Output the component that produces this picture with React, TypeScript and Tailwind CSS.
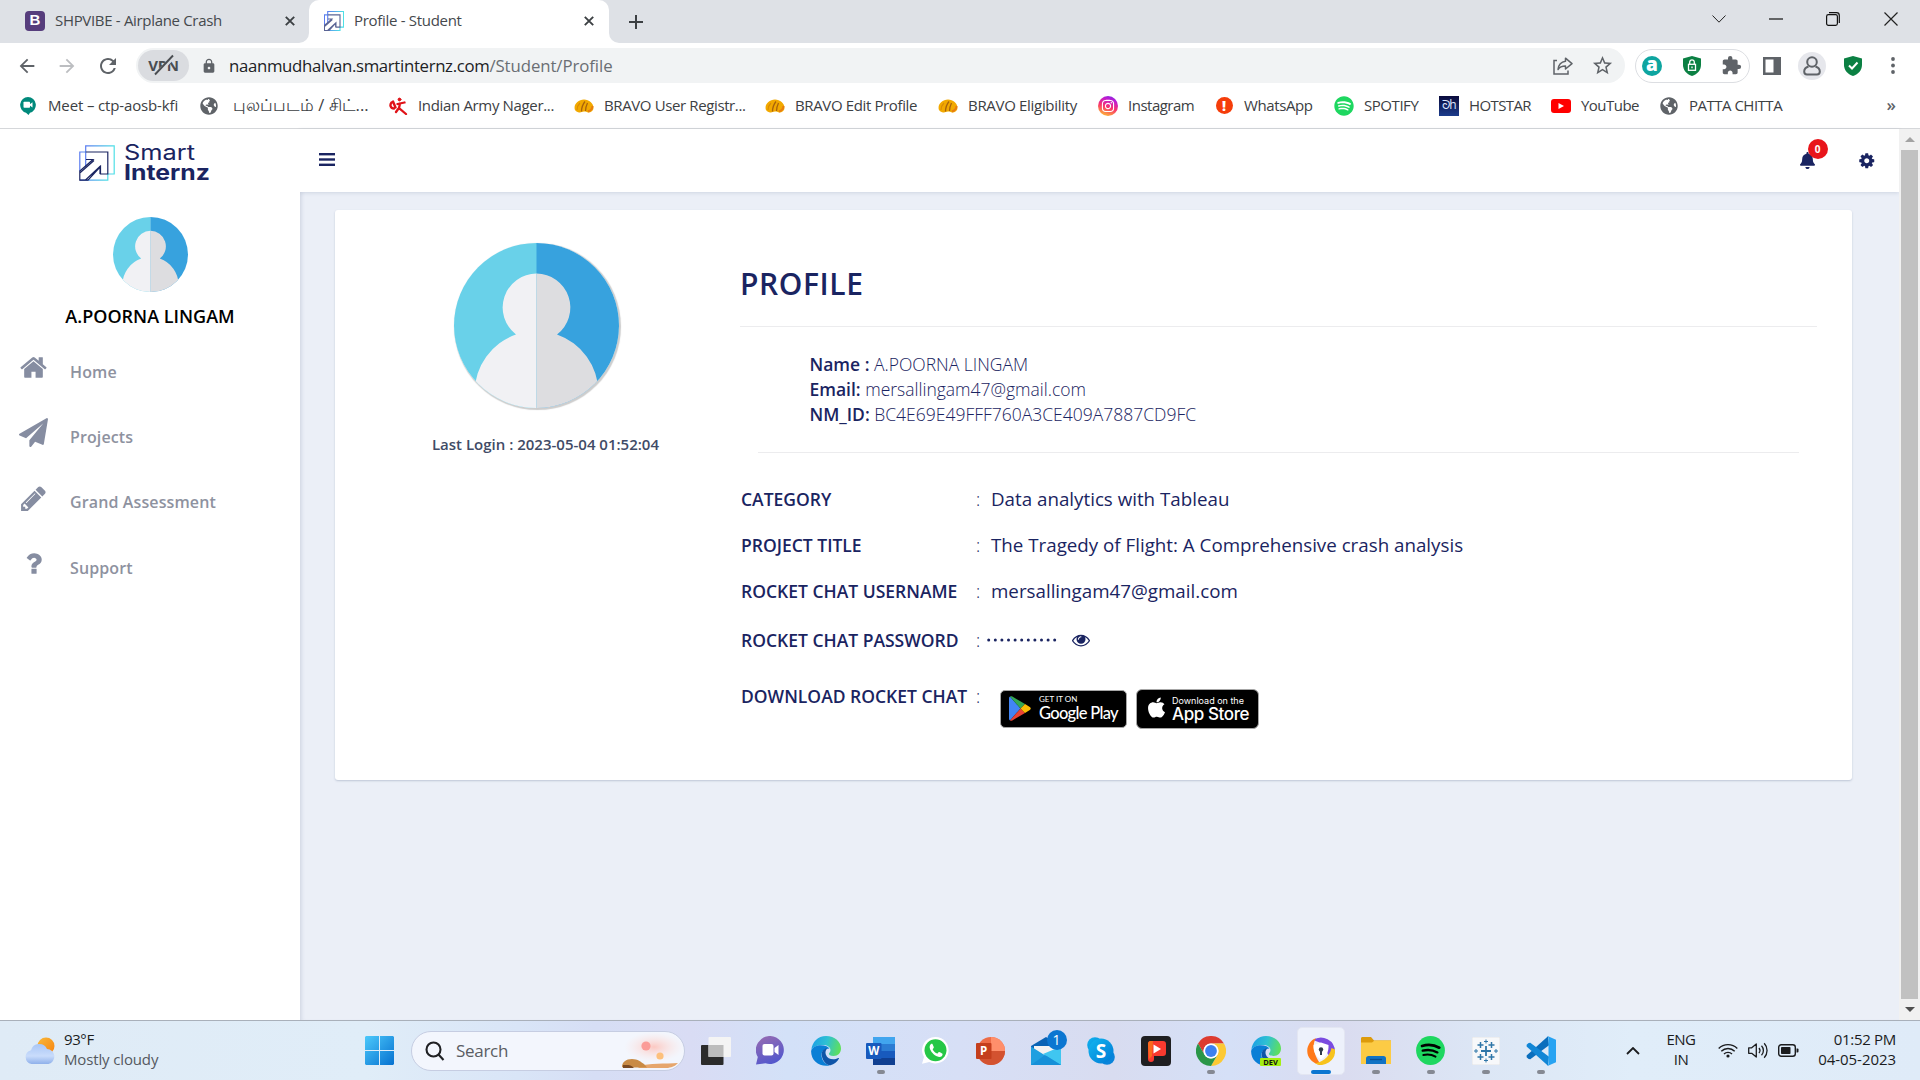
import React from "react";
import { FaBell, FaInstagram, FaSpotify, FaApple, FaGlobeAmericas } from "react-icons/fa";
import { MdExtension, MdLock, MdStarBorder, MdRefresh, MdArrowBack, MdArrowForward } from "react-icons/md";

const uiFont = "font-['Open_Sans','Noto_Sans',sans-serif]";

/* ---------- shared drawings ---------- */

function Avatar({ size, id }: { size: number; id: string }) {
  return (
    <svg width={size} height={size} viewBox="0 0 165 165">
      <clipPath id={id}>
        <circle cx="82.5" cy="82.5" r="82.5" />
      </clipPath>
      <g clipPath={`url(#${id})`}>
        <rect width="83" height="165" fill="#69d1e9" />
        <rect x="82.5" width="83" height="165" fill="#37a2de" />
        <path d="M82.5 30.500A34 34 0 0 0 62 91.500A62 62 0 0 0 20.500 149V165H82.500Z" fill="#f1f1f4" />
        <path d="M82.500 30.500A34 34 0 0 1 103 91.500A62 62 0 0 1 144.500 149V165H82.500Z" fill="#dddde0" />
      </g>
    </svg>
  );
}

function Glyph({ d, size, color }: { d: string; size: number; color: string }) {
  return (
    <svg width={size} height={size} viewBox="0 0 1792 1792" fill={color}>
      <path d={d} />
    </svg>
  );
}

const glyphs = {
  home: "M1472 992v480q0 26-19 45t-45 19h-384v-384h-256v384h-384q-26 0-45-19t-19-45v-480q0-1 .5-3t.5-3l575-474 575 474q1 2 1 6zm223-69l-62 74q-8 9-21 11h-3q-13 0-21-7l-692-577-692 577q-12 8-24 7-13-2-21-11l-62-74q-8-10-7-23.5t11-21.500l719-599q32-26 76-26t76 26l244 204v-195q0-14 9-23t23-9h192q14 0 23 9t9 23v408l219 182q10 8 11 21.500t-7 23.500z",
  plane: "M1764 11q33 24 27 64l-256 1536q-5 29-32 45-14 8-31 8-11 0-24-5l-453-185-242 295q-18 23-49 23-13 0-22-4-19-7-30.500-23.500t-11.500-36.500v-349l864-1059-1069 925-395-162q-37-14-40-55-2-40 32-59l1664-960q15-9 32-9 20 0 36 11z",
  pencil: "M491 1536l91-91-235-235-91 91v107h128v128h107zm523-928q0-22-22-22-10 0-17 7l-542 542q-7 7-7 17 0 22 22 22 10 0 17-7l542-542q7-7 7-17zm-54-192l416 416-832 832h-416v-416zm683 96q0 53-37 90l-166 166-416-416 166-165q36-38 90-38 53 0 91 38l235 234q37 39 37 91z",
  question: "M1088 1256v240q0 16-12 28t-28 12h-240q-16 0-28-12t-12-28v-240q0-16 12-28t28-12h240q16 0 28 12t12 28zm316-600q0 54-15.500 101t-35 76.500-55 59.500-57.500 43.500-61 35.500q-41 23-68.500 65t-27.500 67q0 17-12 32.500t-28 15.500h-240q-15 0-25.500-18.500t-10.500-37.500v-45q0-83 65-156.500t143-108.500q59-27 84-56t25-76q0-42-46.500-74t-107.500-32q-65 0-108 29-35 25-107 115-13 16-31 16-12 0-25-8l-164-125q-13-10-15.500-25t5.500-28q160-266 464-266 80 0 161 31t146 83 106 127.500 41 158.500z",
  eye: "M1664 960q-152-236-381-353 61 104 61 225 0 185-131.500 316.500t-316.500 131.500-316.500-131.500-131.500-316.500q0-121 61-225-229 117-381 353 133 205 333.500 326.500t434.500 121.500 434.500-121.500 333.500-326.500zm-720-384q0-20-14-34t-34-14q-125 0-214.500 89.500t-89.500 214.500q0 20 14 34t34 14 34-14 14-34q0-86 61-147t147-61q20 0 34-14t14-34zm848 384q0 34-20 69-140 230-376.500 368.500t-499.500 138.500-499.500-139-376.500-368q-20-35-20-69t20-69q140-229 376.500-368t499.500-139 499.500 139 376.500 368q20 35 20 69z",
  cog: "M1152 896q0-106-75-181t-181-75-181 75-75 181 75 181 181 75 181-75 75-181zm512-109v222q0 12-8 23t-20 13l-185 28q-19 54-39 91 35 50 107 138 10 12 10 25t-9 23q-27 37-99 108t-94 71q-12 0-26-9l-138-108q-44 23-91 38-16 136-29 186-7 28-36 28h-222q-14 0-24.500-8.500t-11.500-21.500l-28-184q-49-16-90-37l-141 107q-10 9-25 9-14 0-25-11-126-114-165-168-7-10-7-23 0-12 8-23 15-21 51-66.500t54-70.500q-27-50-41-99l-183-27q-13-2-21-12.500t-8-23.500v-222q0-12 8-23t19-13l186-28q14-46 39-92-40-57-107-138-10-12-10-24 0-10 9-23 26-36 98.500-107.500t94.500-71.500q13 0 26 10l138 107q44-23 91-38 16-136 29-186 7-28 36-28h222q14 0 24.500 8.500t11.500 21.500l28 184q49 16 90 37l142-107q9-9 24-9 13 0 25 10 129 119 165 170 7 8 7 22 0 12-8 23-15 21-51 66.500t-54 70.500q26 50 41 98l183 28q13 2 21 12.500t8 23.500z",
};

function BrandMark({ size, stroke }: { size: number; stroke: number }) {
  return (
    <svg width={size} height={size} viewBox="0 0 36 36" fill="none" strokeWidth={stroke}>
      <defs>
        <linearGradient id={`bm${size}`} x1="0" x2="1">
          <stop offset="0" stopColor="#5b7cf0" />
          <stop offset="1" stopColor="#4fe0e6" />
        </linearGradient>
      </defs>
      <path d="M6.700 7V.800H35.200V29H28.500M6.700 7V22" stroke={`url(#bm${size})`} />
      <path d="M.800 26V7H7M.800 35.200H28.800V29" stroke={`url(#bm${size})`} />
      <path d="M6.700 7H28.800V29H21.500V21.500L9 35.200H.800V26L14 14.500H7M21 29V21.500L6.500 35M.800 28L15 15.500" stroke={size > 30 ? "#1a2461" : "#5a6494"} />
    </svg>
  );
}

/* ---------- browser chrome ---------- */

function CloseX() {
  return (
    <svg width="10" height="10" viewBox="0 0 10 10" stroke="#3c4043" strokeWidth="1.900">
      <path d="M.8.800l8.400 8.400M9.200.800L.800 9.200" />
    </svg>
  );
}

function TabStrip() {
  return (
    <div className="flex h-[43px] bg-[linear-gradient(#dee1e6_50%,#fff_50%)]">
      <div className="flex w-[309px] items-center rounded-br-[10px] bg-[#dee1e6] pb-[2px] pl-[25px]">
        <div className="flex h-5 w-5 items-center justify-center rounded-[4px] bg-[#563d7c] font-['Liberation_Sans'] text-[15px] font-bold text-white">B</div>
        <span className="ml-[10px] w-[230px] text-[15px] tracking-[-0.32px] text-[#45494d]">SHPVIBE - Airplane Crash</span>
        <CloseX />
      </div>
      <div className="flex w-[300px] items-center rounded-t-[10px] bg-white pb-[2px] pl-[15px]">
        <BrandMark size={20} stroke={2} />
        <span className="ml-[10px] w-[230px] text-[15px] tracking-[-0.3px] text-[#45494d]">Profile - Student</span>
        <CloseX />
      </div>
      <div className="flex flex-1 items-center rounded-bl-[10px] bg-[#dee1e6] pl-5">
        <svg width="14" height="14" viewBox="0 0 14 14" stroke="#3c4043" strokeWidth="2">
          <path d="M7 0v14M0 7h14" />
        </svg>
        <div className="ml-auto flex items-center pr-[22px] pb-[6px]">
          <svg width="14" height="8" viewBox="0 0 14 8" fill="none" stroke="#222">
            <path d="M.5.500L7 7.200 13.500.500" />
          </svg>
          <svg width="14" height="14" viewBox="0 0 14 14" stroke="#111" strokeWidth="1.200" className="ml-[43px]">
            <path d="M0 7h14" />
          </svg>
          <svg width="14" height="14" viewBox="0 0 14 14" fill="none" stroke="#111" strokeWidth="1.200" className="ml-[43px]">
            <rect x=".6" y="2.600" width="10.800" height="10.800" rx="1.800" />
            <path d="M3 .7h7.500a2.800 2.800 0 0 1 2.800 2.800V11" />
          </svg>
          <svg width="14" height="14" viewBox="0 0 14 14" stroke="#222" strokeWidth="1.200" className="ml-[44px]">
            <path d="M.5.500l13 13M13.500.500l-13 13" />
          </svg>
        </div>
      </div>
    </div>
  );
}

function Shield({ children }: { children: React.ReactNode }) {
  return (
    <svg width="18" height="20" viewBox="0 0 18 20" fill="none">
      <path d="M9 0l9 2.600V9c0 5-3.500 9-9 11C3.500 18 0 14 0 9V2.600z" fill="#0b8043" />
      {children}
    </svg>
  );
}

function Toolbar() {
  return (
    <div className="flex h-[45px] items-center bg-white pl-[16px] text-[#5f6368]">
      <MdArrowBack size={22} />
      <MdArrowForward size={22} className="ml-[18px] text-[#bcbec1]" />
      <MdRefresh size={24} className="ml-[18px]" />
      <div className="ml-[16px] flex h-[35px] w-[1489px] items-center rounded-full bg-[#f1f3f4] pl-[2px]">
        <div className="relative flex h-[31px] w-[51px] items-center justify-center rounded-full bg-[#dadce0] text-[15px] font-bold tracking-[-0.3px] text-[#4a4d51]">
          VPN
          <svg className="absolute top-[4px] left-[15px]" width="24" height="22" viewBox="0 0 24 22">
            <path d="M3 20.500L20.500 3" stroke="#dadce0" strokeWidth="4" />
            <path d="M2 20.500L20 1.500" stroke="#4a4d51" strokeWidth="1.900" />
          </svg>
        </div>
        <MdLock size={16} className="ml-[12px]" />
        <div className="ml-[12px] flex text-[16.8px]">
          <span className="tracking-[-0.33px] text-[#202124]">naanmudhalvan.smartinternz.com</span>
          <span className="tracking-[-0.08px] text-[#6a6e73]">/Student/Profile</span>
        </div>
        <svg width="20" height="18" viewBox="0 0 20 18" fill="none" stroke="#5f6368" strokeWidth="1.500" className="ml-auto">
          <path d="M4 3.500H1V17h14v-3.500" />
          <path d="M12.500 1.200L19 6.600l-6.500 5.400V9C9 9 6.500 10 5 12.500 5.500 8 8.500 4.700 12.500 4.200z" strokeLinejoin="round" />
        </svg>
        <MdStarBorder size={23} className="mr-[11px] ml-[18px]" />
      </div>
      <div className="ml-[10px] flex h-[34px] w-[115px] items-center rounded-full border border-[#dcdee2] pl-[6px]">
        <div className="flex h-5 w-5 items-center justify-center rounded-full bg-[#0ea5a0] pb-[3px] text-[19px] leading-none font-extrabold text-white">a</div>
        <div className="ml-[21px]">
          <Shield>
            <rect x="5.500" y="8.300" width="7" height="6" stroke="#fff" strokeWidth="1.300" />
            <path d="M6.700 8V6.200a2.300 2.300 0 0 1 4.600 0V8M9 10.500v1.800" stroke="#fff" strokeWidth="1.300" />
          </Shield>
        </div>
        <MdExtension size={21} className="ml-[20px]" />
      </div>
      <svg width="18" height="18" viewBox="0 0 18 18" className="ml-[13px]">
        <path d="M0 0h18v18H0zM2.500 2.500v13h8v-13z" fill="#5f6368" fillRule="evenodd" />
      </svg>
      <div className="ml-[17px] flex h-[28px] w-[28px] items-center justify-center rounded-full bg-[#e6e7ec]">
        <svg width="18" height="20" viewBox="0 0 18 20" fill="none" stroke="#5f6368" strokeWidth="2">
          <circle cx="9" cy="6" r="4.800" />
          <path d="M5.500 10.500C2.500 11.500 1.200 13.500 1.200 15.500c0 2 1 3 2.800 3h10c1.800 0 2.800-1 2.800-3 0-2-1.300-4-4.300-5" />
        </svg>
      </div>
      <div className="ml-[18px]">
        <Shield>
          <path d="M5 9.500l3 3 5.500-6" stroke="#fff" strokeWidth="2" />
        </Shield>
      </div>
      <svg width="4" height="17" viewBox="0 0 4 17" fill="#5f6368" className="ml-[29px]">
        <circle cx="2" cy="2" r="1.900" />
        <circle cx="2" cy="8.500" r="1.900" />
        <circle cx="2" cy="15" r="1.900" />
      </svg>
    </div>
  );
}

const GlobeIcon = <FaGlobeAmericas size={18} color="#5f6368" />;
const BravoIcon = (
  <svg width="20" height="14" viewBox="0 0 20 14">
    <path d="M1 11C-1 6 4 .500 10 .500S21 6 19 11c-2 2.500-4 2.500-5 2.500-2-1-2-1-4-1s-3 1-4 1-4-.500-5-2.500z" fill="#f2a900" />
    <path d="M7.500 12.500C7.500 8 9 5 11 2.500M11.500 12c0-4 1-6 2-8" stroke="#a8630c" strokeWidth="1.300" fill="none" />
    <path d="M3 11c0-3 1-5 3-7" stroke="#d98a06" strokeWidth="1.100" fill="none" />
    <path d="M14 12.500c2.500-1 4.500-3 4.500-5.500" stroke="#e87d10" strokeWidth="2" fill="none" />
  </svg>
);

const bookmarks: { label: string; cls: string; icon: React.ReactNode }[] = [
  {
    label: "Meet – ctp-aosb-kfi",
    cls: "w-[181px] tracking-[-0.14px]",
    icon: (
      <svg width="16" height="18" viewBox="0 0 16 18">
        <path d="M8 0a8 8 0 0 1 2 15.700L8.500 18 6 15.700A8 8 0 0 1 8 0z" fill="#00897b" />
        <rect x="3.500" y="4.800" width="6.500" height="6" rx=".8" fill="#fff" />
        <path d="M9.500 7.500l3-2.300v5.300l-3-2.200z" fill="#fff" />
      </svg>
    ),
  },
  { label: "புலப்படம் / சிட்...", cls: "w-[189px] text-[16.500px] pl-[14px]", icon: GlobeIcon },
  {
    label: "Indian Army Nager...",
    cls: "w-[186px] tracking-[-0.34px]",
    icon: (
      <svg width="19" height="18" viewBox="0 0 19 18" fill="none" stroke="#e01218" strokeLinecap="round">
        <circle cx="10.500" cy="2.500" r="1.400" fill="#e01218" />
        <path d="M11 6.500l-1 4.500 7 6M9.500 11.500L7 15M8.500 7l7-1.500" strokeWidth="2.300" />
        <path d="M2.500 5.500c-2 2.500-1 6 2.500 6M4 4.500l2.500 6" strokeWidth="2.400" />
      </svg>
    ),
  },
  { label: "BRAVO User Registr...", cls: "w-[191px] tracking-[-0.38px]", icon: BravoIcon },
  { label: "BRAVO Edit Profile", cls: "w-[173px] tracking-[-0.37px]", icon: BravoIcon },
  { label: "BRAVO Eligibility", cls: "w-[160px] tracking-[-0.31px]", icon: BravoIcon },
  {
    label: "Instagram",
    cls: "w-[116px] tracking-[-0.5px]",
    icon: (
      <div className="flex h-5 w-5 items-center justify-center rounded-full bg-[linear-gradient(20deg,#fdc62f_5%,#f9356b_45%,#c21bd0_75%,#6a2ce8)]">
        <FaInstagram size={14} color="#fff" />
      </div>
    ),
  },
  {
    label: "WhatsApp",
    cls: "w-[120px] tracking-[-0.4px]",
    icon: <div className="flex h-[17px] w-[17px] items-center justify-center rounded-full bg-[#f53d0a] text-[14px] font-extrabold text-white">!</div>,
  },
  { label: "SPOTIFY", cls: "w-[105px] tracking-[-0.45px]", icon: <FaSpotify size={20} color="#1ed760" /> },
  {
    label: "HOTSTAR",
    cls: "w-[112px] tracking-[-0.6px]",
    icon: <div className="flex h-5 w-5 items-center justify-center bg-[linear-gradient(#0a0a3c,#1c3c8c)] pb-[2px] font-['Open_Sans'] text-[12px] tracking-[-0.5px] text-[#dfe6ff]">ᘐh</div>,
  },
  {
    label: "YouTube",
    cls: "w-[108px] tracking-[-0.53px]",
    icon: (
      <svg width="20" height="14" viewBox="0 0 20 14">
        <rect width="20" height="14" rx="3" fill="#f00" />
        <path d="M7.500 4l5.500 3-5.500 3z" fill="#fff" />
      </svg>
    ),
  },
  { label: "PATTA CHITTA", cls: "w-[200px] tracking-[-0.5px]", icon: GlobeIcon },
];

function BookmarksBar() {
  return (
    <div className="flex h-[41px] items-center border-b border-[#d5d7da] bg-white pb-[5px] pl-[18px] text-[15px] whitespace-nowrap text-[#3c4043]">
      {bookmarks.map((b) => (
        <React.Fragment key={b.label}>
          <div className="flex w-5 shrink-0 justify-center">{b.icon}</div>
          <span className={`-mr-5 shrink-0 pl-[10px] ${b.cls}`}>{b.label}</span>
        </React.Fragment>
      ))}
      <span className="mr-[24px] mb-[2px] ml-auto text-[17px] font-semibold text-[#5f6368]">»</span>
    </div>
  );
}

/* ---------- page ---------- */

const menu = [
  { label: "Home", d: glyphs.home },
  { label: "Projects", d: glyphs.plane },
  { label: "Grand Assessment", d: glyphs.pencil },
  { label: "Support", d: glyphs.question },
];

function Sidebar() {
  return (
    <aside className="relative z-10 w-[300px] shrink-0 bg-white">
      <div className="flex h-[63px] items-start pt-[16px] pl-[79px]">
        <BrandMark size={36} stroke={1.2} />
        <div className="ml-[9px] flex flex-col font-['Inter'] text-[21px] leading-[19px] text-[#1a2461]">
          <span className="-mt-[2px] mb-[1px] origin-left scale-x-[1.21]">Smart</span>
          <span className="origin-left scale-x-[1.18] font-bold">Internz</span>
        </div>
      </div>
      <div className="flex flex-col items-center pt-[25px]">
        <Avatar size={75} id="avatarSmall" />
        <span className="mt-[12px] text-[18px] leading-[25px] font-semibold text-black">A.POORNA LINGAM</span>
      </div>
      <ul className="pt-[10px]">
        {menu.map((m) => (
          <li key={m.label} className="flex h-[65.300px] items-center pl-[19px] text-base font-semibold tracking-[0.12px] text-[#8e929f]">
            <span className="mb-[8px]">
              <Glyph d={m.d} size={29} color="#868da1" />
            </span>
            <span className="ml-[22px]">{m.label}</span>
          </li>
        ))}
      </ul>
    </aside>
  );
}

function TopBar() {
  return (
    <div className="flex h-[63px] items-center bg-white pl-[19px] shadow-[0_1px_4px_rgba(60,80,120,0.16)]">
      <svg width="16" height="13" viewBox="0 0 16 13" fill="#1a2461" className="mb-[2px]">
        <rect width="16" height="2.400" />
        <rect y="5.300" width="16" height="2.400" />
        <rect y="10.600" width="16" height="2.400" />
      </svg>
      <div className="relative ml-auto">
        <FaBell size={17} color="#1a2461" />
        <span className="absolute -top-[13px] left-[9px] flex h-5 w-5 items-center justify-center rounded-full bg-[#e8151b] text-[10px] font-bold text-white">0</span>
      </div>
      <div className="mr-[24px] ml-[42px]">
        <Glyph d={glyphs.cog} size={17.5} color="#1a2461" />
      </div>
    </div>
  );
}

function DetailRow({ label, cls, children }: { label: string; cls: string; children: React.ReactNode }) {
  return (
    <div className={`flex items-center ${cls}`}>
      <span className="w-[235px] text-[17.500px] font-semibold whitespace-nowrap">{label}</span>
      <span className="w-[15px] text-[17.500px] font-light">:</span>
      {children}
    </div>
  );
}

function GooglePlayBadge() {
  return (
    <div className="flex h-[38px] w-[127px] items-center rounded-[5px] border border-[#a6a6a6] bg-black pl-[8px] text-white">
      <svg width="22" height="25" viewBox="0 0 22 25">
        <path d="M1 .500L11.500 12.500 1 24.500C.3 24 0 23.500 0 22.500v-20C0 1.500.3 1 1 .500z" fill="#4285f4" />
        <path d="M1 .500C1.800 0 2.600.200 3.300.600L16 8 11.500 12.500z" fill="#34a853" />
        <path d="M1 24.500c.8.500 1.600.300 2.300-.1L16 17l-4.500-4.500z" fill="#ea4335" />
        <path d="M16 8l4.800 3c1.300.800 1.300 2.200 0 3L16 17l-4.500-4.500z" fill="#fbbc04" />
      </svg>
      <div className="ml-[8px] flex flex-col font-['Lato'] whitespace-nowrap">
        <span className="text-[8px] leading-[9px]">GET IT ON</span>
        <span className="text-[16.500px] leading-[18px] font-medium tracking-[-0.7px]">Google Play</span>
      </div>
    </div>
  );
}

function AppStoreBadge() {
  return (
    <div className="flex h-10 w-[123px] items-center rounded-[6px] border border-[#a6a6a6] bg-black pl-[8px] text-white">
      <FaApple size={23} className="mb-[2px]" />
      <div className="ml-[4px] flex flex-col font-['Inter'] whitespace-nowrap">
        <span className="text-[9px] leading-[11px]">Download on the</span>
        <span className="text-[17px] leading-[17px] font-medium tracking-[-0.4px]">App Store</span>
      </div>
    </div>
  );
}

function ProfileCard() {
  return (
    <div className="mt-[18px] ml-[35px] flex h-[570px] w-[1517px] rounded-[3px] bg-white text-[#1a2461] shadow-[0_1px_2px_rgba(60,80,120,0.25)]">
      <div className="flex w-[405px] flex-col items-center pt-[33px]">
        <div className="-ml-[3px] rounded-full shadow-[1px_1px_1px_1px_rgba(0,0,0,0.2)]">
          <Avatar size={165} id="avatarLarge" />
        </div>
        <span className="mt-[24px] ml-[16px] text-[15px] leading-[24px] font-semibold whitespace-nowrap text-[#414b66]">Last Login : 2023-05-04 01:52:04</span>
      </div>
      <div className="w-[1077px]">
        <h1 className="pt-[53px] text-[30px] leading-[42px] font-semibold tracking-[0.6px]">PROFILE</h1>
        <hr className="mt-[21px] border-[#ececee]" />
        <div className="pt-[25px] pl-[69.500px] text-[17.500px] leading-[25px] font-light">
          <p><b className="font-semibold">Name :</b> A.POORNA LINGAM</p>
          <p><b className="font-semibold">Email:</b> mersallingam47@gmail.com</p>
          <p><b className="font-semibold">NM_ID:</b> BC4E69E49FFF760A3CE409A7887CD9FC</p>
        </div>
        <hr className="mt-[25px] mr-[18px] ml-[18px] border-[#ececee]" />
        <div className="pt-[23px] pl-[1px]">
          <DetailRow label="CATEGORY" cls="h-[46px]">
            <span className="text-[18.750px]">Data analytics with Tableau</span>
          </DetailRow>
          <DetailRow label="PROJECT TITLE" cls="h-[46px]">
            <span className="text-[18.750px]">The Tragedy of Flight: A Comprehensive crash analysis</span>
          </DetailRow>
          <DetailRow label="ROCKET CHAT USERNAME" cls="h-[46px]">
            <span className="text-[18.750px]">mersallingam47@gmail.com</span>
          </DetailRow>
          <DetailRow label="ROCKET CHAT PASSWORD" cls="h-[52px]">
            <svg width="70" height="4" viewBox="0 0 70 4" fill="#1a2461" className="-ml-[4px]">
              {Array.from({ length: 11 }, (_, i) => (
                <circle key={i} cx={1.7 + i * 6.6} cy="2" r="1.500" />
              ))}
            </svg>
            <span className="ml-[15px]">
              <Glyph d={glyphs.eye} size={18} color="#1a2461" />
            </span>
          </DetailRow>
          <DetailRow label="DOWNLOAD ROCKET CHAT" cls="h-[60px]">
            <div className="mt-[25px] ml-[9px] flex items-center gap-[9px]">
              <GooglePlayBadge />
              <AppStoreBadge />
            </div>
          </DetailRow>
        </div>
      </div>
    </div>
  );
}

function Scrollbar() {
  return (
    <div className="relative z-10 flex w-[21px] shrink-0 flex-col items-center bg-[#f1f1f1]">
      <div className="flex h-[21px] items-center">
        <svg width="10" height="5" viewBox="0 0 10 5" fill="#a3a3a3"><path d="M0 5L5 0l5 5z" /></svg>
      </div>
      <div className="w-[17px] flex-1 bg-[#c1c1c1]" />
      <div className="flex h-[21px] items-center">
        <svg width="10" height="5" viewBox="0 0 10 5" fill="#505050"><path d="M0 0l5 5 5-5z" /></svg>
      </div>
    </div>
  );
}

/* ---------- taskbar ---------- */

function EdgeIcon({ id, dev }: { id: string; dev?: boolean }) {
  return (
    <svg width="30" height="30" viewBox="0 0 30 30">
      <defs>
        <linearGradient id={id} x1="0" y1=".3" x2="1" y2=".5">
          <stop offset="0" stopColor="#1c9fe6" />
          <stop offset=".5" stopColor="#2fc1d2" />
          <stop offset="1" stopColor="#5fe05a" />
        </linearGradient>
      </defs>
      <path d="M.4 14C1 6 7 0 15 0c9 0 15 6 15 12.500 0 4.500-3 7.500-7.500 7.500-3.500 0-4.600-1.200-4.600-2.200 0-.900 1.600-1.300 1.600-3.800C19.500 11 16 9 12 9 6 9 2 11 .4 14z" fill={`url(#${id})`} />
      <path d="M.1 15C1 11.500 5 9.200 9.500 9.200c5 0 8 1.800 9 3.300-6 0-8 3.500-8 6.500 0 5 3.500 9.500 8.500 10.400C9 31.500 0 25 .1 15z" fill="#0a7fd6" />
      <path d="M15.500 12.200c-4 1-5.200 4.300-4.700 7.300.7 5.500 4.700 10 8.700 9.700 3.500-.700 7-3.700 8.500-6.700.3-.500-.2-.800-.8-.500-4.200 2.500-10.700 1.500-12.400-3.500-.8-2.500 0-5 1.700-6z" fill="#0f55a8" />
      {dev && (
        <g>
          <rect x="9" y="22" width="21" height="8" rx="1" fill="#a4ef12" />
          <text x="19.500" y="29" textAnchor="middle" fontFamily="Open Sans" fontWeight="700" fontSize="7.500" fill="#111">DEV</text>
        </g>
      )}
    </svg>
  );
}

const taskIcons: { name: string; mark?: "open" | "active"; icon: React.ReactNode }[] = [
  {
    name: "task-view",
    icon: (
      <svg width="30" height="28" viewBox="0 0 30 28">
        <rect y="8" width="22.500" height="20" rx="1" fill="#2b2b2b" />
        <rect x="7.500" y="0" width="22.500" height="20" rx="1" fill="#f4f4f4" />
        <rect x="7.500" y="8" width="15" height="12" fill="#bcbcbc" />
      </svg>
    ),
  },
  {
    name: "chat",
    icon: (
      <svg width="29" height="29" viewBox="0 0 29 29">
        <defs>
          <linearGradient id="chat" x1="0" y1="0" x2=".4" y2="1"><stop offset="0" stopColor="#9a6cb0" /><stop offset="1" stopColor="#5558cc" /></linearGradient>
        </defs>
        <path d="M14.500 0a14 14 0 1 1-5 27.300L0 28.500 1.800 21A14 14 0 0 1 14.500 0z" fill="url(#chat)" />
        <rect x="6.500" y="8" width="11" height="11.500" rx="2" fill="#fff" />
        <path d="M18.500 12l4-3v10l-4-3z" fill="#fff" />
      </svg>
    ),
  },
  { name: "edge", icon: <EdgeIcon id="edge1" /> },
  {
    name: "word",
    mark: "open",
    icon: (
      <svg width="29" height="28" viewBox="0 0 29 28">
        <rect x="7" width="22" height="7.500" fill="#41a5ee" />
        <rect x="7" y="7" width="22" height="7" fill="#2b7cd3" />
        <rect x="7" y="14" width="22" height="7" fill="#185abd" />
        <rect x="7" y="21" width="22" height="7" fill="#103f91" />
        <rect y="6" width="15.500" height="16" rx="1" fill="#185abd" />
        <text x="7.700" y="18" textAnchor="middle" fontFamily="Open Sans" fontWeight="700" fontSize="11.500" fill="#fff">W</text>
      </svg>
    ),
  },
  {
    name: "whatsapp",
    icon: (
      <svg width="27" height="27" viewBox="0 0 27 27">
        <path d="M13.500 0a13.200 13.200 0 1 1-6.200 24.900L0 26.800 2 20A13.200 13.200 0 0 1 13.500 0z" fill="#fff" />
        <circle cx="13.500" cy="13.300" r="11" fill="#25c746" />
        <path d="M9.300 6.800c-1.500 1-2.200 3-1.200 5.500 1.500 3.700 5 7 9 7.600 2 .200 3.500-1.200 3.500-3 0-.400-3.200-2-3.600-1.900-.6.200-1.300 1.700-1.800 1.600-1.700-.600-3.700-2.500-4.500-4.200-.1-.500 1.100-1.500 1.100-2 0-.600-1.200-3.400-1.600-3.600-.3-.100-.600-.100-.9 0z" fill="#fff" />
      </svg>
    ),
  },
  {
    name: "powerpoint",
    icon: (
      <svg width="29" height="28" viewBox="0 0 29 28">
        <circle cx="15" cy="14" r="14" fill="#ed6c47" />
        <path d="M15 0a14 14 0 0 1 14 14H15z" fill="#ff8f6b" />
        <path d="M1 14a14 14 0 0 0 28 0z" fill="#d35230" />
        <rect y="6" width="15.500" height="16" rx="1" fill="#c43e1c" />
        <text x="7.700" y="18" textAnchor="middle" fontFamily="Open Sans" fontWeight="700" fontSize="11.500" fill="#fff">P</text>
      </svg>
    ),
  },
  {
    name: "mail",
    icon: (
      <div className="relative">
        <svg width="30" height="28" viewBox="0 0 30 28">
          <path d="M0 9L15 0l15 9v5H0z" fill="#0a63b5" />
          <path d="M3 9h24v8H3z" fill="#f3f3f3" />
          <path d="M0 9.500L15 19l15-9.500V28H0z" fill="#1f9fe0" />
          <path d="M30 9.500V28L12 17z" fill="#40c6f0" />
          <path d="M0 28h30L14 18z" fill="#1690d8" />
        </svg>
        <span className="absolute -top-[7px] left-[16px] flex h-5 w-5 items-center justify-center rounded-full bg-[#0b76d1] text-[14px] text-white">1</span>
      </div>
    ),
  },
  {
    name: "skype",
    icon: (
      <svg width="28" height="28" viewBox="0 0 28 28">
        <defs>
          <linearGradient id="sky" x1="0" y1="0" x2="1" y2="1"><stop offset="0" stopColor="#12b7f0" /><stop offset="1" stopColor="#0078d4" /></linearGradient>
        </defs>
        <circle cx="8" cy="8" r="7.800" fill="url(#sky)" />
        <circle cx="20" cy="20" r="7.800" fill="#0a84da" />
        <circle cx="14" cy="14" r="12.500" fill="url(#sky)" />
        <text x="14" y="20.500" textAnchor="middle" fontFamily="Open Sans" fontWeight="700" fontSize="19" fill="#fff">S</text>
      </svg>
    ),
  },
  {
    name: "player",
    icon: (
      <svg width="30" height="30" viewBox="0 0 30 30">
        <rect width="30" height="30" rx="4" fill="#1f1f21" />
        <path d="M9 5h13a3 3 0 0 1 3 3v9a3 3 0 0 1-3 3h-9v3a3 3 0 0 1-6 0V8c0-1.600.8-2.600 2-3z" fill="#f93a2f" />
        <path d="M7 8c0-1.600.8-2.600 2-3l3 0-1 15-3 3z" fill="#fb6a1c" />
        <path d="M12.500 8.500L20 13l-7.500 4.500z" fill="#fff" />
      </svg>
    ),
  },
  {
    name: "chrome",
    mark: "open",
    icon: (
      <svg width="30" height="30" viewBox="0 0 30 30">
        <path d="M2 7.500A15 15 0 0 1 28 7.500H15A7.500 7.500 0 0 0 8.500 18.750z" fill="#dd3b30" />
        <path d="M28 7.500A15 15 0 0 1 15 30L21.500 18.750A7.500 7.500 0 0 0 15 7.500z" fill="#fcc934" />
        <path d="M15 30A15 15 0 0 1 2 7.500L8.500 18.750A7.500 7.500 0 0 0 21.500 18.750z" fill="#2a9648" />
        <circle cx="15" cy="15" r="7.500" fill="#fff" />
        <circle cx="15" cy="15" r="5.900" fill="#3c80f0" />
      </svg>
    ),
  },
  { name: "edge-dev", icon: <EdgeIcon id="edge2" dev /> },
  {
    name: "secure-browser",
    mark: "active",
    icon: (
      <svg width="28" height="28" viewBox="0 0 28 28">
        <path d="M6 3A14 14 0 0 1 27.900 15C26 20 20 20 20 14L14 6z" fill="#7a4be0" />
        <path d="M9 1C1 4-3 15 3.500 22.500 7 26.500 12 28 14 28 8 20 4 9 9 1z" fill="#ff7a1a" />
        <path d="M28 12.500A14 14 0 0 1 8 26.500C14 25 22 22 24.500 11z" fill="#f7c31c" />
        <path d="M14 5.500l7.500 2.500c.5 7-2.500 11.500-7.500 14.500C9 19.500 6 15 6.500 8z" fill="#fff" />
        <circle cx="14" cy="12.500" r="2.200" fill="#2f3a4a" />
        <rect x="13" y="13" width="2" height="5" fill="#2f3a4a" />
      </svg>
    ),
  },
  {
    name: "explorer",
    mark: "open",
    icon: (
      <svg width="30" height="27" viewBox="0 0 30 27">
        <path d="M0 1.500C0 .6.600 0 1.500 0H10l3 3.500H30V10H0z" fill="#dd9b0c" />
        <path d="M0 5.500h11l2.500-2H30V27H0z" fill="#fccb45" />
        <path d="M5 27v-5.500C5 20 6 19 7.500 19h15c1.500 0 2.500 1 2.500 2.500V27z" fill="#1273c4" />
        <path d="M9 22.500h12" stroke="#0b4f91" strokeWidth="1.300" />
      </svg>
    ),
  },
  {
    name: "spotify",
    mark: "open",
    icon: (
      <svg width="29" height="29" viewBox="0 0 29 29" fill="none" stroke="#000" strokeLinecap="round">
        <circle cx="14.500" cy="14.500" r="14.400" fill="#1ed760" stroke="none" />
        <path d="M6 10c6-1.700 12.500-1 17.300 1.700" strokeWidth="2.700" />
        <path d="M6.700 14.700c5-1.300 10.300-.700 14.700 1.700" strokeWidth="2.300" />
        <path d="M7.300 19c4.200-1 8.500-.500 12.200 1.600" strokeWidth="2" />
      </svg>
    ),
  },
  {
    name: "tableau",
    mark: "open",
    icon: (
      <svg width="28" height="28" viewBox="0 0 28 28" fill="none" stroke="#2f76a8">
        <rect width="28" height="28" fill="#f7f8fa" stroke="#d5d7da" strokeWidth=".600" />
        <path d="M14 9v10M9 14h10" strokeWidth="1.800" />
        <path d="M8.500 5v6M5.500 8h6M19.500 5v6M16.500 8h6M8.500 17v6M5.500 20h6M19.500 17v6M16.500 20h6" strokeWidth="1.500" />
        <path d="M14 2.500v4M12 4.500h4M14 21.500v4M12 23.500h4M4 12v4M2 14h4M24 12v4M22 14h4" strokeWidth="1" />
      </svg>
    ),
  },
  {
    name: "vscode",
    mark: "open",
    icon: (
      <svg width="30" height="30" viewBox="0 0 30 30">
        <path d="M22 .2L.600 19.600v1.600l2 1.900 1.700.1L23 9.200z" fill="#0a6ebd" />
        <path d="M22 29.800L.600 10.400V8.800l2-1.900 1.700-.1L23 20.800z" fill="#1186d6" />
        <path d="M21.500 0L30 3.700v22.600L21.500 30l1-2V2z" fill="#27a3f2" />
      </svg>
    ),
  },
];

function Taskbar() {
  return (
    <div className="flex h-[60px] items-center border-t border-[#a9b0ba] bg-[linear-gradient(90deg,#dfebf6_0%,#e0edf8_19%,#d9e5f7_27%,#d6def5_31%,#d9dcf4_36%,#d3e1f8_41%,#d7dff6_50%,#d8dcf0_58%,#d5e0f7_64%,#dadcf0_70%,#dce6f5_77%,#e0edf9_85%,#dfebf8_100%)]">
      <svg width="32" height="28" viewBox="0 0 32 28" className="ml-[24px] shrink-0">
        <defs>
          <linearGradient id="cloud" x1="0" y1="0" x2="0" y2="1"><stop offset="0" stopColor="#a9c6f5" /><stop offset=".6" stopColor="#c9dcfb" /><stop offset="1" stopColor="#8fb0ea" /></linearGradient>
          <linearGradient id="sun" x1="0" y1="0" x2="1" y2="1"><stop offset="0" stopColor="#f8b93a" /><stop offset="1" stopColor="#f8820f" /></linearGradient>
        </defs>
        <circle cx="22" cy="9" r="8.500" fill="url(#sun)" />
        <path d="M7.500 27A7 7 0 0 1 7 13.300 8.500 8.500 0 0 1 23 12a7.600 7.600 0 0 1 1.500 15z" fill="url(#cloud)" />
      </svg>
      <div className="mb-[4px] ml-[8px] flex w-[301px] flex-col text-[15px] leading-5">
        <span className="tracking-[-0.4px] text-[#1b1c1e]">93°F</span>
        <span className="tracking-[-0.14px] text-[#55595f]">Mostly cloudy</span>
      </div>
      <svg width="29" height="29" viewBox="0 0 29 29">
        <defs>
          <linearGradient id="win" x1="0" y1="0" x2="1" y2="1" gradientUnits="objectBoundingBox"><stop offset="0" stopColor="#4cc9fb" /><stop offset="1" stopColor="#0671d0" /></linearGradient>
        </defs>
        <path d="M1 0h13v14H0V1zM15 0h13l1 1v13H15zM0 15h14v14H1l-1-1zM15 15h14v13l-1 1H15z" fill="url(#win)" />
      </svg>
      <div className="ml-[17px] flex h-10 w-[274px] items-center overflow-hidden rounded-full border border-[#c6cde2] bg-[#f3f6fd] pl-[13px]">
        <svg width="20" height="20" viewBox="0 0 20 20" fill="none" stroke="#202124" strokeWidth="2.100">
          <circle cx="8.500" cy="8.500" r="7" />
          <path d="M13.500 13.500l5 5.500" />
        </svg>
        <span className="ml-[11px] text-[17px] tracking-[-0.3px] text-[#5a5d63]">Search</span>
        <svg width="64" height="38" viewBox="0 0 64 38" className="ml-auto">
          <defs>
            <radialGradient id="glow"><stop offset="0" stopColor="#ffb9ae" stopOpacity=".75" /><stop offset="1" stopColor="#ffe0da" stopOpacity="0" /></radialGradient>
          </defs>
          <ellipse cx="34" cy="15" rx="30" ry="15" fill="url(#glow)" />
          <circle cx="26" cy="14" r="4.600" fill="#fb9c98" />
          <circle cx="40" cy="24" r="3.600" fill="#fdc07c" />
          <path d="M20 34c8-3 26-2 38-3-3 3-5 4-10 5H18z" fill="#e6a66c" />
          <path d="M2 35c0-5 4-8 10-8s9 3 12 5l3 3.500H3z" fill="#c98b45" />
          <path d="M3 33c3 0 8-1 11 3H3z" fill="#7b4a22" />
        </svg>
      </div>
      <div className="ml-[3px] flex h-full">
        {taskIcons.map((t) => (
          <div key={t.name} className="relative flex h-full w-[55px] items-center justify-center">
            <div className={t.mark === "active" ? "flex h-12 w-12 items-center justify-center rounded-[5px] border border-[#e3e6f2] bg-[#edf1fb]" : "flex h-12 w-12 items-center justify-center"}>{t.icon}</div>
            {t.mark === "open" && <i className="absolute bottom-[6px] left-[23.500px] h-1 w-2 rounded-full bg-[#858993]" />}
            {t.mark === "active" && <i className="absolute bottom-[6px] left-[17.500px] h-1 w-5 rounded-full bg-[#0b76d1]" />}
          </div>
        ))}
      </div>
      <svg width="14" height="8" viewBox="0 0 14 8" fill="none" stroke="#1b1c1e" strokeWidth="1.800" className="ml-[58px]">
        <path d="M1 7l6-6 6 6" />
      </svg>
      <div className="mb-[3px] ml-[22px] flex w-[38px] flex-col items-center text-[15px] leading-5 tracking-[-0.5px] text-[#1b1c1e]">
        <span>ENG</span>
        <span>IN</span>
      </div>
      <svg width="20" height="15" viewBox="0 0 20 15" fill="none" stroke="#1b1c1e" strokeWidth="1.400" className="ml-[18px]">
        <path d="M.7 5.500a13 13 0 0 1 18.600 0M3.300 8.300a9.500 9.500 0 0 1 13.400 0M6 11a5.800 5.800 0 0 1 8 0" />
        <circle cx="10" cy="13" r="1.600" fill="#1b1c1e" stroke="none" />
      </svg>
      <svg width="21" height="17" viewBox="0 0 21 17" fill="none" stroke="#1b1c1e" strokeWidth="1.300" className="ml-[10px]">
        <path d="M.7 5.800h3L8.300 2v13L3.700 11.300h-3z" strokeLinejoin="round" />
        <path d="M11 6a4 4 0 0 1 0 5M13.500 3.700a7 7 0 0 1 0 9.600M16.200 1.300a10.500 10.500 0 0 1 0 14.400" />
      </svg>
      <svg width="21" height="13" viewBox="0 0 21 13" className="ml-[9px]">
        <rect x=".7" y=".7" width="16.600" height="11.600" rx="2.500" fill="none" stroke="#1b1c1e" strokeWidth="1.400" />
        <rect x="3" y="3" width="9.500" height="7" rx=".8" fill="#1b1c1e" />
        <path d="M18.500 4.500h1a1 1 0 0 1 1 1v2a1 1 0 0 1-1 1h-1z" fill="#1b1c1e" />
      </svg>
      <div className="mr-[24px] mb-[4px] ml-auto flex flex-col items-end text-[15px] leading-5 whitespace-nowrap text-[#1b1c1e]">
        <span className="tracking-[-0.3px]">01:52 PM</span>
        <span className="tracking-[-0.05px]">04-05-2023</span>
      </div>
    </div>
  );
}

export default function App() {
  return (
    <div className={`flex h-[1080px] w-[1920px] flex-col overflow-hidden bg-white ${uiFont}`}>
      <TabStrip />
      <Toolbar />
      <BookmarksBar />
      <div className="flex min-h-0 flex-1">
        <Sidebar />
        <main className="flex-1 bg-[#ebeff7] shadow-[inset_4px_0_4px_-3px_rgba(60,80,120,0.18)]">
          <TopBar />
          <ProfileCard />
        </main>
        <Scrollbar />
      </div>
      <Taskbar />
    </div>
  );
}
